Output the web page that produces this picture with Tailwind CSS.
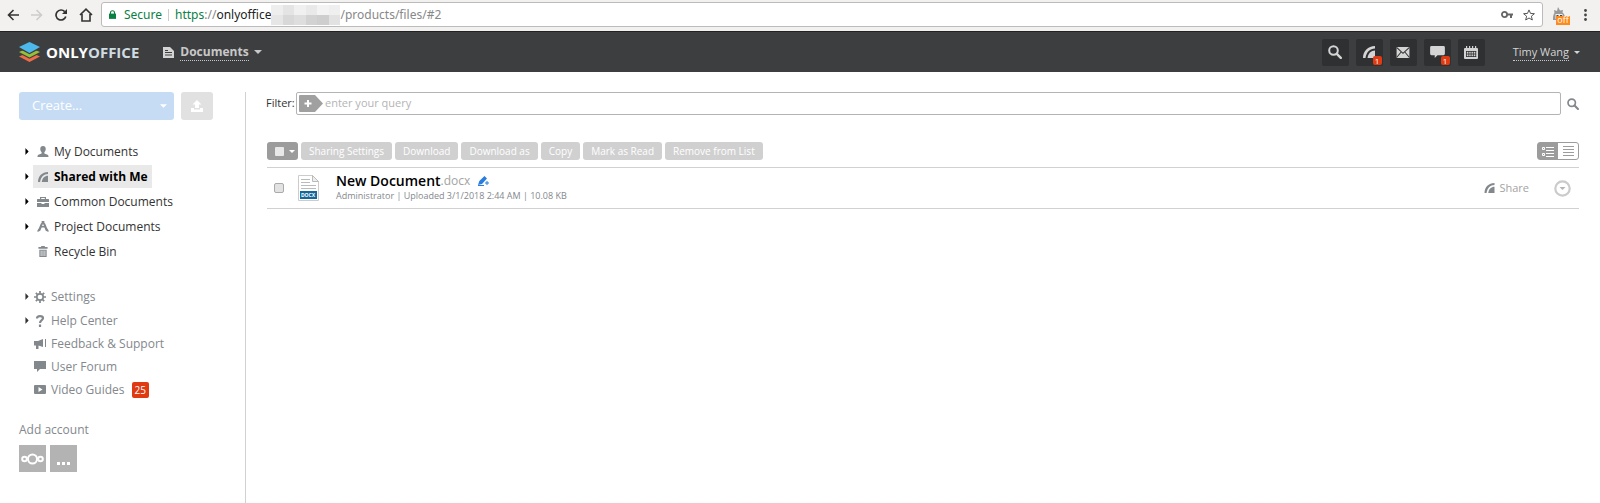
<!DOCTYPE html>
<html lang="en">
<head>
    <meta charset="UTF-8">
    <meta name="viewport" content="width=device-width, initial-scale=1.0">
    <title>ONLYOFFICE Documents</title>
    <script src="https://cdn.jsdelivr.net/npm/@tailwindcss/browser@4"></script>
</head>
<body class="min-h-screen flex flex-col bg-white font-['Open_Sans',sans-serif] text-xs text-[#333]">

    <!-- shared shapes -->
    <svg class="hidden">
        <symbol id="feed" viewBox="0 0 12 12"><path d="M0 12C0 5 5 0 12 0v2.500C7 2.500 3.500 6 2.500 12z"/><path d="M4.500 12C5 7.500 8 4.500 12 4.500V12z"/></symbol>
        <symbol id="search" viewBox="0 0 14 14"><circle cx="5.500" cy="5.500" r="4.300" fill="none" stroke="currentColor" stroke-width="2"/><path d="M8.800 8.800l4 4" stroke="currentColor" stroke-width="2.400" stroke-linecap="round"/></symbol>
        <symbol id="chat" viewBox="0 0 16 13"><path d="M1.500 0h13A1.500 1.500 0 0 1 16 1.500v7a1.500 1.500 0 0 1-1.500 1.500H8l-3 3v-3H1.500A1.500 1.500 0 0 1 0 8.500v-7A1.500 1.500 0 0 1 1.500 0z"/></symbol>
        <symbol id="down" viewBox="0 0 8 4"><path d="M0 0h8L4 4z"/></symbol>
        <symbol id="right" viewBox="0 0 4 8"><path d="M0 0l4 4-4 4z"/></symbol>
    </svg>

    <!-- browser bar -->
    <div class="h-[31px] flex items-center bg-[#f2f1f0] px-[7px] pb-[2px] text-[#333]">
        <nav class="flex items-center gap-3 mr-2">
            <button aria-label="Back"><svg class="w-3 h-3" viewBox="0 0 12 12" fill="none" stroke="#333" stroke-width="1.600"><path d="M12 6H1.500M6.500 1L1.500 6l5 5"/></svg></button>
            <button aria-label="Forward"><svg class="w-3 h-3" viewBox="0 0 12 12" fill="none" stroke="#ccc" stroke-width="1.600"><path d="M0 6h10.500M5.500 1l5 5-5 5"/></svg></button>
            <button aria-label="Reload"><svg class="w-3 h-3" viewBox="0 0 12 12" fill="none" stroke="#333" stroke-width="1.700"><path d="M10.800 7.500A5 5 0 1 1 9.700 2.600"/><path d="M12 0v5H7z" fill="#333" stroke="none"/></svg></button>
            <button aria-label="Home"><svg class="w-[14px] h-[14px]" viewBox="0 0 14 14" fill="none" stroke="#333" stroke-width="1.600"><path d="M1 7l6-5.800L13 7M3 6v7h8V6"/></svg></button>
        </nav>
        <div class="flex-1 h-[25px] flex items-center bg-white border border-[#bbb] rounded-[3px] px-[7px] font-['Noto_Sans',sans-serif]">
            <svg class="w-[7px] h-[9px] mr-2" viewBox="0 0 8 10"><rect y="4" width="8" height="6" fill="#0b8043"/><path d="M1.700 5V3a2.300 2.300 0 0 1 4.600 0v2" fill="none" stroke="#0b8043" stroke-width="1.300"/></svg>
            <span class="text-[#0b8043]">Secure</span>
            <span class="w-px h-3 bg-[#ccc] mx-[6px]"></span>
            <span class="flex items-center text-[#888]"><span class="text-[#0b8043]">https</span>://<span class="text-[#222]">onlyoffice</span>
                <span class="grid grid-cols-6 w-[69px] h-[20px]">
                    <i class="bg-[#eee]"></i><i class="bg-[#e4e4e4]"></i><i class="bg-[#f0f0f0]"></i><i class="bg-[#e9e9e9]"></i><i class="bg-[#f3f3f3]"></i><i class="bg-[#efefef]"></i>
                    <i class="bg-[#e6e6e6]"></i><i class="bg-[#d8d8d8]"></i><i class="bg-[#dedede]"></i><i class="bg-[#d2d2d2]"></i><i class="bg-[#cecece]"></i><i class="bg-[#e2e2e2]"></i>
                </span>/products/files/#2</span>
            <button class="ml-auto mr-[10px]" aria-label="Saved password"><svg class="w-3 h-[7px]" viewBox="0 0 12 7"><circle cx="3.500" cy="3.500" r="2.600" fill="none" stroke="#666" stroke-width="1.800"/><path d="M6 2.500h6v2h-1V7H9V4.500H6z" fill="#666"/></svg></button>
            <button aria-label="Bookmark"><svg class="w-3 h-3" viewBox="0 0 12 12" fill="none" stroke="#555" stroke-width="1"><path d="M6 .9l1.500 3.500 3.900.3-3 2.500.9 3.800L6 9 2.700 11l.9-3.800-3-2.500 3.900-.3z"/></svg></button>
        </div>
        <button class="relative flex ml-[9px] w-[20px] h-[16px]" aria-label="Extension">
            <svg class="w-[14px] h-[14px]" viewBox="0 0 14 14"><path d="M1 13c0-3 0-5 1.500-7L2 3l3 1 1-4 2 3.500L11 3l-.5 2.500C12.500 7 13 9 13 13z" fill="#999"/><path d="M3.500 7h7v5h-7z" fill="#eee"/><path d="M4.500 8h2v2h-2zM8 8h2v2H8z" fill="#444"/></svg>
            <span class="absolute left-1 top-[9px] w-[14px] h-[9px] leading-[8px] text-[9px] text-center text-white bg-[#ff8a1c]">off</span>
        </button>
        <button class="ml-[12px] mr-[6px]" aria-label="Menu"><svg class="w-[3px] h-3" viewBox="0 0 3 12" fill="#444"><circle cx="1.500" cy="1.500" r="1.400"/><circle cx="1.500" cy="6" r="1.400"/><circle cx="1.500" cy="10.500" r="1.400"/></svg></button>
    </div>

    <!-- app header -->
    <header class="h-[41px] flex items-center bg-[#3d3e40] border-t border-[#222] pl-[18px] pr-[20px] text-[#d4d4d4]">
        <a href="#" class="flex items-center">
            <svg class="w-[23px] h-[20px] mr-[5px]" viewBox="0 0 23 20">
                <path d="M1 14.500L11.500 10 22 14.500 11.500 20z" fill="#ee6c48"/>
                <path d="M1 11.200L11.500 6.500 22 11.200l-10.500 5.600z" fill="#3d3e40"/>
                <path d="M1 10L11.500 5.500 22 10l-10.500 5.500z" fill="#95c038"/>
                <path d="M1 6.700L11.500 2 22 6.700l-10.500 5.600z" fill="#3d3e40"/>
                <path d="M1 5L11.500 0 22 5l-10.500 6z" fill="#4db8ec"/>
            </svg>
            <span class="text-[15px] leading-5 font-bold text-white">ONLY<span class="text-[#cfdde3]">OFFICE</span></span>
        </a>
        <button class="flex items-center ml-6 font-bold text-[#c8c8c8]">
            <svg class="w-[11px] h-[11px] mr-[6px]" viewBox="0 0 11 11"><path d="M0 0h7l4 4v7H0z" fill="#d4d4d4"/><path d="M2 3.500h3M2 5.500h7M2 8h7" stroke="#3d3e40"/></svg>
            <span class="leading-4 border-b border-dotted border-[#c8c8c8]">Documents</span>
            <svg class="w-2 h-1 ml-[5px] fill-current"><use href="#down"/></svg>
        </button>
        <div class="ml-auto flex gap-[7px]">
            <button aria-label="Search" class="w-[27px] h-[27px] flex items-center justify-center rounded-[2px] bg-[#2f3031]"><svg class="w-[14px] h-[14px]"><use href="#search"/></svg></button>
            <button aria-label="Feed" class="relative w-[27px] h-[27px] flex items-center justify-center rounded-[2px] bg-[#2f3031]"><svg class="w-3 h-3 fill-current"><use href="#feed"/></svg>
                <span class="absolute right-[1px] bottom-[1px] w-[9px] h-[9px] rounded-[2px] bg-[#e03a12] text-white text-[8px] leading-[9px]">1</span></button>
            <button aria-label="Mail" class="w-[27px] h-[27px] flex items-center justify-center rounded-[2px] bg-[#2f3031]"><svg class="w-[14px] h-[11px]" viewBox="0 0 14 12"><path d="M0 0h14v12H0z" fill="#d4d4d4"/><path d="M0 .5l7 6.500 7-6.500M0 11.500L5 5.500M14 11.500L9 5.500" fill="none" stroke="#2f3031" stroke-width="1.100"/></svg></button>
            <button aria-label="Talk" class="relative w-[27px] h-[27px] flex items-center justify-center rounded-[2px] bg-[#2f3031]"><svg class="w-[15px] h-3 fill-current"><use href="#chat"/></svg>
                <span class="absolute right-[1px] bottom-[1px] w-[9px] h-[9px] rounded-[2px] bg-[#e03a12] text-white text-[8px] leading-[9px]">1</span></button>
            <button aria-label="Calendar" class="w-[27px] h-[27px] flex items-center justify-center rounded-[2px] bg-[#2f3031]"><svg class="w-[14px] h-[13px]" viewBox="0 0 14 13"><path d="M1 2h12a1 1 0 0 1 1 1v9a1 1 0 0 1-1 1H1a1 1 0 0 1-1-1V3a1 1 0 0 1 1-1zM2 0h1.200v2H2zM5 0h1.200v2H5zM8 0h1.200v2H8zM11 0h1.200v2H11z" fill="#d4d4d4"/><path d="M2 5.500h10.200M2 8h10.200M2 10.500h10.200M2.500 5v6M4.800 5v6M7.100 5v6M9.400 5v6M11.700 5v6" stroke="#2f3031" stroke-width=".8"/></svg></button>
        </div>
        <button class="flex items-center ml-[28px] text-[11px]">
            <span class="leading-4 border-b border-dotted border-[#c8c8c8]">Timy Wang</span>
            <svg class="w-[6px] h-[3px] ml-[5px] fill-current" viewBox="0 0 8 4"><use href="#down"/></svg>
        </button>
    </header>

    <div class="flex-1 flex pt-5">
        <!-- sidebar -->
        <aside class="w-[246px] shrink-0 border-r border-[#d1d1d1] pl-[19px]">
            <div class="flex gap-[7px]">
                <button class="w-[155px] h-[28px] flex items-center justify-between pl-[13px] pr-[7px] rounded-[3px] bg-[#c6dcf5] text-[13px] text-white">Create...<svg class="w-[7px] h-1 fill-current"><use href="#down"/></svg></button>
                <button aria-label="Upload" class="w-8 h-[28px] flex items-center justify-center rounded-[3px] bg-[#e1e1e1]"><svg class="w-3 h-3" viewBox="0 0 12 12" fill="#fff"><path d="M6 0l4.500 4.500H8V8H4V4.500H1.500zM0 8h3v1.500h6V8h3v4H0z"/></svg></button>
            </div>

            <nav class="mt-5 flex flex-col gap-[2px] pl-[6px] leading-[23px]">
                <a href="#" class="flex items-center"><svg class="w-1 h-[7px] mr-1" viewBox="0 0 4 8"><use href="#right"/></svg><span class="flex items-center px-1"><svg class="w-3 h-[11px] mr-[5px]" viewBox="0 0 12 12" fill="#83888d"><path d="M6 0c2 0 3 1.300 3 3.200C9 5 8 6.300 7.500 6.800v1.400L11 9.500c.7.300 1 1 1 2.500H0c0-1.500.3-2.200 1-2.500l3.500-1.300V6.800C4 6.300 3 5 3 3.200 3 1.300 4 0 6 0z"/></svg>My Documents</span></a>
                <a href="#" class="flex items-center font-bold text-black"><svg class="w-1 h-[7px] mr-1" viewBox="0 0 4 8"><use href="#right"/></svg><span class="flex items-center px-1 bg-[#e9e9e9]"><svg class="w-3 h-[10px] mr-[5px] fill-[#83888d]"><use href="#feed"/></svg>Shared with Me</span></a>
                <a href="#" class="flex items-center"><svg class="w-1 h-[7px] mr-1" viewBox="0 0 4 8"><use href="#right"/></svg><span class="flex items-center px-1"><svg class="w-3 h-[10px] mr-[5px]" viewBox="0 0 12 10" fill="#83888d"><path d="M3 0h6v2h2.500l.5.500V5H0V2.500L.5 2H3zm1.200 1v1h3.600V1zM0 6h4.500v1h3V6H12v4H0z" fill-rule="evenodd"/></svg>Common Documents</span></a>
                <a href="#" class="flex items-center"><svg class="w-1 h-[7px] mr-1" viewBox="0 0 4 8"><use href="#right"/></svg><span class="flex items-center px-1"><svg class="w-3 h-[11px] mr-[5px]" viewBox="0 0 12 12" fill="#83888d"><path d="M4.500 0h3v2l1 1L10.500 8 12 10v2L9 10.500 7.500 7h-3L3 10.500 0 12v-2l1.500-2 2-5 1-1zM6 3L5 5.500h2z" fill-rule="evenodd"/></svg>Project Documents</span></a>
                <a href="#" class="flex items-center pl-2"><span class="flex items-center px-1"><svg class="w-3 h-[11px] mr-[5px]" viewBox="0 0 12 12" fill="#83888d"><path d="M4 0h4v1h3v2H1V1h3zM2 4h8v8H2zm1.500 1v6h.8V5zm2.100 0v6h.8V5zm2.100 0v6h.8V5z" fill-rule="evenodd"/></svg>Recycle Bin</span></a>
            </nav>

            <nav class="mt-[22px] flex flex-col pl-[6px] leading-[23px] text-[#83888d]">
                <a href="#" class="flex items-center"><svg class="w-1 h-[7px] mr-[5px] fill-[#333]" viewBox="0 0 4 8"><use href="#right"/></svg><svg class="w-3 h-3 mr-[5px]" viewBox="0 0 12 12" fill="none" stroke="#83888d"><circle cx="6" cy="6" r="3.200" stroke-width="1.700"/><path d="M6 0v2.500M6 9.500V12M0 6h2.500M9.500 6H12M1.800 1.800l1.700 1.700M8.500 8.500l1.700 1.700M1.800 10.200l1.700-1.700M8.500 3.500l1.700-1.700" stroke-width="1.700"/></svg>Settings</a>
                <a href="#" class="flex items-center mt-px"><svg class="w-1 h-[7px] mr-[5px] fill-[#333]" viewBox="0 0 4 8"><use href="#right"/></svg><svg class="w-3 h-3 mr-[5px]" viewBox="0 0 12 12" fill="none" stroke="#83888d" stroke-width="2.200"><path d="M3 3.500C3 1.800 4.300 1.100 6 1.100s3 .7 3 2.200C9 5.200 6 5 6 8M6 9.500V12"/></svg>Help Center</a>
                <a href="#" class="flex items-center pl-[9px]"><svg class="w-3 h-[10px] mr-[5px]" viewBox="0 0 12 10" fill="#83888d"><path d="M0 2h4l5-2v8L4.500 6.500V10H2V6.500H0zM11 0h1v8h-1z"/></svg>Feedback &amp; Support</a>
                <a href="#" class="flex items-center pl-[9px]"><svg class="w-3 h-[11px] mr-[5px]" viewBox="0 0 12 11" fill="#83888d"><path d="M0 0h12v8H6l-3 3V8H0z"/></svg>User Forum</a>
                <a href="#" class="flex items-center pl-[9px]"><svg class="w-3 h-[9px] mr-[5px]" viewBox="0 0 12 9"><rect width="12" height="9" rx="1" fill="#83888d"/><path d="M4.500 2v5l4-2.500z" fill="#fff"/></svg>Video Guides<span class="ml-[7px] px-[3px] rounded-[2px] bg-[#e03a12] text-white text-[10px] leading-4">25</span></a>
            </nav>

            <h3 class="mt-5 leading-[18px] text-[#83888d]">Add account</h3>
            <div class="flex gap-1 mt-[6px]">
                <button aria-label="Nextcloud" class="w-[27px] h-[27px] flex items-center justify-center bg-[#b3b3b3]"><svg class="w-[23px] h-3" viewBox="0 0 23 12" fill="none" stroke="#fff" stroke-width="2"><circle cx="11.500" cy="6" r="4.500"/><circle cx="3.500" cy="6" r="2.300"/><circle cx="19.500" cy="6" r="2.300"/></svg></button>
                <button aria-label="More accounts" class="w-[27px] h-[27px] flex items-center justify-center bg-[#b3b3b3] pt-[9px]"><svg class="w-[13px] h-[3px]" viewBox="0 0 13 3" fill="#fff"><path d="M0 0h3v3H0zM5 0h3v3H5zM10 0h3v3h-3z"/></svg></button>
            </div>
        </aside>

        <!-- file list -->
        <main class="flex-1 min-w-0 pl-5 pr-[21px]">
            <form class="flex items-center">
                <label for="query" class="w-[30px] text-[11px]">Filter:</label>
                <div class="flex-1 h-[23px] flex items-center border border-[#b4b4b4] rounded-[2px] pl-[2px]">
                    <button type="button" aria-label="Add filter" class="mr-[2px]"><svg class="w-6 h-[17px]" viewBox="0 0 24 17"><path d="M1 0h15l8 8.500-8 8.500H1a1 1 0 0 1-1-1V1a1 1 0 0 1 1-1z" fill="#a0a0a0"/><path d="M5.500 8.500h7M9 5v7" stroke="#fff" stroke-width="2"/></svg></button>
                    <input id="query" type="text" placeholder="enter your query" class="flex-1 outline-none text-[11px] placeholder:text-[#b4b4b4]">
                </div>
                <button aria-label="Search files" class="ml-[6px] text-[#83888d]"><svg class="w-3 h-3" viewBox="0 0 14 14"><use href="#search"/></svg></button>
            </form>

            <div class="mt-[27px] ml-px flex gap-[3px] text-white text-[10px] leading-[18px]">
                <button aria-label="Select" class="w-[31px] flex items-center rounded-[3px] bg-[#9c9c9c] pl-[8px]"><span class="w-[9px] h-[9px] bg-[#e8e8e8] rounded-[1px] mr-[5px]"></span><svg class="w-[6px] h-[3px] fill-current" viewBox="0 0 8 4"><use href="#down"/></svg></button>
                <button class="px-2 rounded-[3px] bg-[#d0d0d0]">Sharing Settings</button>
                <button class="px-2 rounded-[3px] bg-[#d0d0d0]">Download</button>
                <button class="px-2 rounded-[3px] bg-[#d0d0d0]">Download as</button>
                <button class="px-2 rounded-[3px] bg-[#d0d0d0]">Copy</button>
                <button class="px-2 rounded-[3px] bg-[#d0d0d0]">Mark as Read</button>
                <button class="px-2 rounded-[3px] bg-[#d0d0d0]">Remove from List</button>
                <div class="ml-auto flex border border-[#9c9c9c] rounded-[3px]">
                    <button aria-label="Normal view" class="w-5 h-4 flex items-center justify-center bg-[#9c9c9c]"><svg class="w-3 h-[11px]" viewBox="0 0 12 11" fill="none" stroke="#fff"><path d="M.5 1.500h2v2h-2zM.5 7.500h2v2h-2zM4 1.500h8M4 4.500h8M4 7.500h8M4 10.500h8"/></svg></button>
                    <button aria-label="Compact view" class="w-5 h-4 flex items-center justify-center"><svg class="w-[11px] h-[10px]" viewBox="0 0 11 10" stroke="#9c9c9c"><path d="M0 .5h11M0 3.500h11M0 6.500h11M0 9.500h11"/></svg></button>
                </div>
            </div>

            <ul class="mt-[7px] ml-px border-t border-[#d1d1d1]">
                <li class="h-[41px] flex items-center border-b border-[#d1d1d1] pl-[7px]">
                    <input type="checkbox" aria-label="Select New Document.docx" class="appearance-none w-[10px] h-[10px] rounded-[2px] border border-[#aaa] bg-[#e2e2e2]">
                    <svg class="w-[21px] h-[26px] ml-[14px] mr-[17px]" viewBox="0 0 21 26">
                        <path d="M.5.500h14l6 6v19H.5z" fill="#fff" stroke="#ccc"/><path d="M14.500.500v6h6z" fill="#eee" stroke="#bbb"/>
                        <path d="M3 4.500h9M3 7.500h9M3 10.500h15M3 13.500h15" stroke="#bbb"/>
                        <rect x="2" y="16" width="17" height="8" fill="#146899"/>
                        <text x="10" y="22" text-anchor="middle" font-family="Open Sans" font-size="5" font-weight="700" fill="#fff">DOCX</text>
                    </svg>
                    <div>
                        <div class="flex items-center text-[14px] leading-4"><a href="#" class="font-semibold text-black">New Document</a><span class="text-[#a3a3a3] text-xs">.docx</span>
                            <button aria-label="Edit" class="ml-2"><svg class="w-[11px] h-[10px]" viewBox="0 0 11 10" fill="#2a7fde"><path d="M6.500 0L9 2.500 4 8 0 9l1.300-4zM7 6.500h1.500V5h1v1.500H11v1H9.500V9h-1V7.500H7zM0 9h6v1H0z"/></svg></button>
                        </div>
                        <p class="text-[9px] leading-[14px] text-[#83888d]">Administrator | Uploaded 3/1/2018 2:44 AM | 10.08 KB</p>
                    </div>
                    <a href="#" class="ml-auto flex items-center text-[11px] text-[#a3a3a3]"><svg class="w-[11px] h-[10px] mr-1 fill-[#83888d]"><use href="#feed"/></svg>Share</a>
                    <button aria-label="File actions" class="ml-[25px] mr-[8px]"><svg class="w-[17px] h-[17px]" viewBox="0 0 17 17"><circle cx="8.500" cy="8.500" r="7.200" fill="none" stroke="#cbcbcb" stroke-width="2.200"/><path d="M5.500 7h6l-3 3z" fill="#b4b4b4"/></svg></button>
                </li>
            </ul>
        </main>
    </div>

</body>
</html>
